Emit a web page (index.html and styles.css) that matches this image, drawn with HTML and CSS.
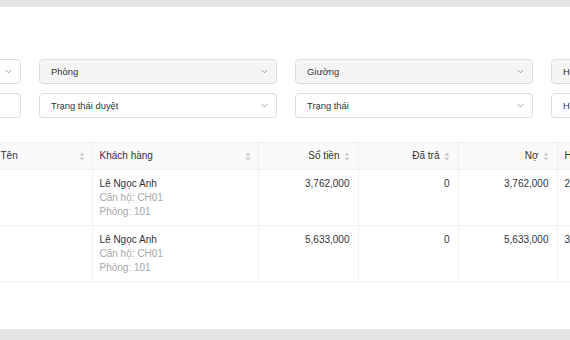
FILE: index.html
```html
<!DOCTYPE html>
<html lang="vi">
<head>
    <meta charset="UTF-8">
    <meta name="viewport" content="width=device-width, initial-scale=1.0">
    <title>Công nợ</title>
    <link rel="stylesheet" href="styles.css">
</head>
<body>
    <div class="page">
        <div class="card">
            <div class="filters">
                <div class="field">Căn hộ <svg class="chev" viewBox="0 0 8 5"><path d="M1 1l3 3 3-3"/></svg></div>
                <div class="field disabled">Phòng <svg class="chev" viewBox="0 0 8 5"><path d="M1 1l3 3 3-3"/></svg></div>
                <div class="field disabled">Giường <svg class="chev" viewBox="0 0 8 5"><path d="M1 1l3 3 3-3"/></svg></div>
                <div class="field disabled">Hoá đơn <svg class="chev" viewBox="0 0 8 5"><path d="M1 1l3 3 3-3"/></svg></div>

                <div class="field">Tháng</div>
                <div class="field">Trạng thái duyệt <svg class="chev" viewBox="0 0 8 5"><path d="M1 1l3 3 3-3"/></svg></div>
                <div class="field">Trạng thái <svg class="chev" viewBox="0 0 8 5"><path d="M1 1l3 3 3-3"/></svg></div>
                <div class="field">Hạn thanh toán <svg class="chev" viewBox="0 0 8 5"><path d="M1 1l3 3 3-3"/></svg></div>
            </div>

            <table class="debt-table">
                <colgroup>
                    <col style="width: 209px">
                    <col style="width: 99px">
                    <col style="width: 166px">
                    <col style="width: 100px">
                    <col style="width: 100px">
                    <col style="width: 99px">
                    <col style="width: 150px">
                </colgroup>
                <thead>
                    <tr>
                        <th><div class="th">Mã <svg class="sort" viewBox="0 0 6 9"><path d="M3 0.5L5.5 3.5H0.5z"/><path d="M3 8.5L5.5 5.5H0.5z"/></svg></div></th>
                        <th><div class="th">Tên <svg class="sort" viewBox="0 0 6 9"><path d="M3 0.5L5.5 3.5H0.5z"/><path d="M3 8.5L5.5 5.5H0.5z"/></svg></div></th>
                        <th><div class="th">Khách hàng <svg class="sort" viewBox="0 0 6 9"><path d="M3 0.5L5.5 3.5H0.5z"/><path d="M3 8.5L5.5 5.5H0.5z"/></svg></div></th>
                        <th><div class="th num">Số tiền <svg class="sort" viewBox="0 0 6 9"><path d="M3 0.5L5.5 3.5H0.5z"/><path d="M3 8.5L5.5 5.5H0.5z"/></svg></div></th>
                        <th><div class="th num">Đã trả <svg class="sort" viewBox="0 0 6 9"><path d="M3 0.5L5.5 3.5H0.5z"/><path d="M3 8.5L5.5 5.5H0.5z"/></svg></div></th>
                        <th><div class="th num">Nợ <svg class="sort" viewBox="0 0 6 9"><path d="M3 0.5L5.5 3.5H0.5z"/><path d="M3 8.5L5.5 5.5H0.5z"/></svg></div></th>
                        <th><div class="th">Hạn thanh toán</div></th>
                    </tr>
                </thead>
                <tbody>
                    <tr>
                        <td>HD001</td>
                        <td></td>
                        <td>
                            <div class="name">Lê Ngọc Anh</div>
                            <div class="sub">Căn hộ: CH01</div>
                            <div class="sub">Phòng: 101</div>
                        </td>
                        <td class="num">3,762,000</td>
                        <td class="num">0</td>
                        <td class="num">3,762,000</td>
                        <td>25/06/2024</td>
                    </tr>
                    <tr>
                        <td>HD002</td>
                        <td></td>
                        <td>
                            <div class="name">Lê Ngọc Anh</div>
                            <div class="sub">Căn hộ: CH01</div>
                            <div class="sub">Phòng: 101</div>
                        </td>
                        <td class="num">5,633,000</td>
                        <td class="num">0</td>
                        <td class="num">5,633,000</td>
                        <td>30/06/2024</td>
                    </tr>
                </tbody>
            </table>
        </div>
    </div>
</body>
</html>
```

FILE: styles.css
```css
body {
    margin: 0;
    font-family: "Liberation Sans", Arial, sans-serif;
    font-size: 10px;
    color: #333;
}
.page {
    width: 570px;
    height: 340px;
    overflow: hidden;
    background: #e4e4e4;
    padding-top: 7px;
    box-sizing: border-box;
}
.card {
    background: white;
    height: 322px;
    width: 1400px;
    margin-left: -237px;
    padding: 52px 0 0 20px;
    box-sizing: border-box;
}
.filters {
    display: grid;
    grid-template-columns: repeat(4, 238px);
    grid-auto-rows: 25px;
    column-gap: 18px;
    row-gap: 9px;
}
.field {
    display: flex;
    align-items: center;
    justify-content: space-between;
    padding: 0 8px 0 11px;
    border: 1px solid #dcdcdc;
    border-radius: 4px;
    background: white;
    color: #333;
    font-size: 9.4px;
}
.field.disabled {
    background: #f5f5f5;
}
.chev {
    width: 7px;
    height: 5px;
    fill: none;
    stroke: #888;
    stroke-width: 1;
}
.debt-table {
    margin-top: 24px;
    margin-left: 1px;
    border-collapse: collapse;
    table-layout: fixed;
    width: 923px;
}
.debt-table th,
.debt-table td {
    border: 1px solid #f0f0f0;
    padding: 7px 7px 6px;
    text-align: left;
    vertical-align: top;
    line-height: 14px;
}
.debt-table th {
    background: #fafafa;
    font-weight: normal;
    color: #333;
    padding: 6px 7px;
}
.debt-table tr > :first-child {
    border-left: none;
}
.th {
    display: flex;
    align-items: center;
    justify-content: space-between;
}
.th.num {
    justify-content: flex-end;
    gap: 4px;
    padding-right: 1px;
}
.sort {
    width: 6px;
    height: 9px;
    fill: #c8c8c8;
}
.debt-table td.num {
    text-align: right;
    padding-right: 8px;
}
.name {
    color: #333;
}
.sub {
    color: #a6a6a6;
}
```
